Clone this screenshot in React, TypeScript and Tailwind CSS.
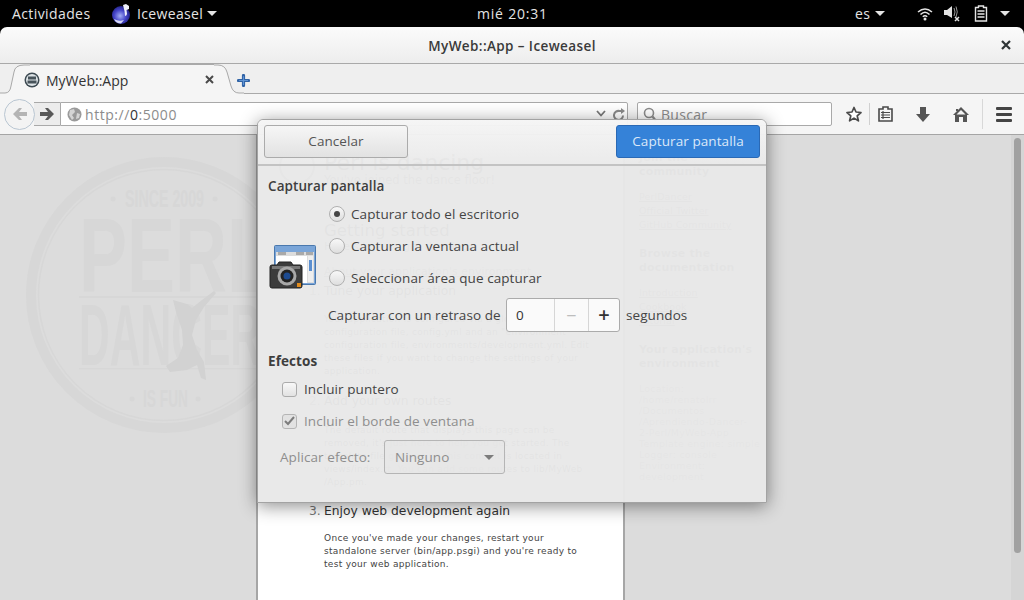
import React from "react";

const uiFont = "font-['Open_Sans','Noto_Sans',sans-serif]";
const pageFont = "font-['DejaVu_Sans',sans-serif]";

const IceweaselIcon = () => (
  <svg width="20" height="22" viewBox="0 0 20 22">
    <defs>
      <radialGradient id="ball" cx="0.45" cy="0.55" r="0.6">
        <stop offset="0" stopColor="#a4aef5" />
        <stop offset="0.55" stopColor="#4444c8" />
        <stop offset="1" stopColor="#1c1c78" />
      </radialGradient>
    </defs>
    <circle cx="10" cy="12" r="9" fill="url(#ball)" />
    <path d="M12 2 L15 1 L18 3 L18 6 L15.5 7 L16 11 Q15.5 13 14 13 L13.5 8 Z" fill="#eef0fa" />
    <path d="M3 16 Q8 19 13 17 L10 20.5 Q5 20.5 3 16 Z" fill="#d6d9f4" />
  </svg>
);

const Caret = ({ className }: { className: string }) => (
  <span className={`inline-block h-0 w-0 border-x-[5px] border-t-[5px] border-x-transparent ${className}`} />
);

const TopBar = () => (
  <div className={`flex h-[27px] items-center bg-black text-[14px] tracking-[0.4px] text-[#e4e4e4] ${uiFont}`}>
    <span className="ml-3 w-[77px] whitespace-nowrap">Actividades</span>
    <span className="ml-[22px]"><IceweaselIcon /></span>
    <span className="ml-[6px] w-[65px] whitespace-nowrap tracking-[0.35px]">Iceweasel</span>
    <Caret className="ml-[5px] border-t-[#e4e4e4]" />
    <span className="ml-[260px] w-[70px] whitespace-nowrap text-center tracking-[0.8px]">mié 20:31</span>
    <span className="ml-[308px] w-[14px]">es</span>
    <Caret className="ml-[6px] border-t-[#e4e4e4]" />
    <svg className="ml-[32px]" width="16" height="16" viewBox="0 0 16 16" fill="none" stroke="#e4e4e4" strokeWidth="1.5">
      <path d="M1 6 Q8 0 15 6" />
      <path d="M3.5 8.5 Q8 4 12.5 8.5" />
      <path d="M5.8 10.8 Q8 8.6 10.2 10.8" />
      <circle cx="8" cy="13" r="1.5" fill="#e4e4e4" stroke="none" />
    </svg>
    <svg className="ml-[11px]" width="17" height="17" viewBox="0 0 17 17" fill="none" stroke="#9a9a9a" strokeWidth="1">
      <path d="M0 5 H3 L8 1 V13 L3 10 H0 Z" fill="#e4e4e4" stroke="none" />
      <path d="M10 3 Q12 7 10 11" />
      <path d="M12 1.5 Q14.5 7 12 12" />
      <path d="M11 12 L15 16 M15 12 L11 16" stroke="#e4e4e4" strokeWidth="1.5" />
    </svg>
    <svg className="ml-[13px]" width="14" height="17" viewBox="0 0 14 17" fill="none" stroke="#e4e4e4">
      <path d="M4.5 1 H9.5 V2.5 H12.5 V16 H1.5 V2.5 H4.5 Z" strokeWidth="1.4" />
      <path d="M3.5 6 H10.5 M3.5 9 H10.5 M3.5 12 H10.5" strokeWidth="1.4" />
    </svg>
    <Caret className="ml-[12px] border-t-[#e4e4e4]" />
  </div>
);

const TitleBar = () => (
  <div className={`relative flex h-[37px] items-center justify-center rounded-t-[7px] border-b border-[#a9a9a9] bg-gradient-to-b from-[#fbfbfb] to-[#ededed] pt-[2px] text-[13.5px] font-semibold tracking-[0.4px] text-[#3a3a3a] ${uiFont}`}>
    MyWeb::App – Iceweasel
    <svg className="absolute right-[13px] top-[13px]" width="10" height="10" viewBox="0 0 10 10" stroke="#2e3436" strokeWidth="2.2">
      <path d="M1 1 L9 9 M9 1 L1 9" />
    </svg>
  </div>
);

const Favicon = () => (
  <svg width="16" height="16" viewBox="0 0 16 16">
    <circle cx="8" cy="8" r="7.5" fill="#3d4a52" />
    <circle cx="8" cy="8" r="6" fill="#dde3e6" />
    <rect x="4" y="4.5" width="8" height="3" fill="#47535a" />
    <rect x="3.5" y="8.5" width="9" height="3" fill="#47535a" />
  </svg>
);

const TabBar = () => (
  <div className="flex h-[30px] items-stretch border-b border-[#a9a9a9] bg-[#efefef]">
    <svg className="-mb-px" width="30" height="30" viewBox="0 0 30 30">
      <path d="M0 29 H5 Q10 29 11 22 L14 8 Q15 1 24 1 H30 V30 H0 Z" fill="#f5f5f5" />
      <path d="M0 29 H5 Q10 29 11 22 L14 8 Q15 1 24 1 H30" fill="none" stroke="#a9a9a9" />
    </svg>
    <div className={`-mb-px flex w-[184px] items-center border-t border-[#a9a9a9] bg-[#f5f5f5] ${uiFont}`}>
      <span className="-ml-[6px]"><Favicon /></span>
      <span className="ml-[6px] pt-[2px] text-[14px] text-[#333]">MyWeb::App</span>
      <svg className="ml-auto" width="9" height="9" viewBox="0 0 9 9" stroke="#4a4a4a" strokeWidth="2">
        <path d="M1 1 L8 8 M8 1 L1 8" />
      </svg>
    </div>
    <svg className="-mb-px" width="30" height="30" viewBox="0 0 30 30">
      <path d="M0 1 H4 Q11 1 13 8 L17 22 Q19 29 25 29 H30 V30 H0 Z" fill="#f5f5f5" />
      <path d="M0 1 H4 Q11 1 13 8 L17 22 Q19 29 25 29 H30" fill="none" stroke="#a9a9a9" />
    </svg>
    <svg className="ml-[-7px] mt-[10px]" width="13" height="13" viewBox="0 0 13 13">
      <path d="M6.5 1.5 V11.5 M1.5 6.5 H11.5" stroke="#2f62a5" strokeWidth="3.2" strokeLinecap="round" />
      <path d="M6.5 2.5 V10.5 M2.5 6.5 H10.5" stroke="#5f93d3" strokeWidth="1.2" strokeLinecap="round" />
    </svg>
  </div>
);

const ArrowIcon = ({ color, flip }: { color: string; flip?: boolean }) => (
  <svg width="14" height="12" viewBox="0 0 14 12" className={flip ? "-scale-x-100" : ""}>
    <path d="M0 6 L6 0 H9 L6 4 H14 V8 H6 L9 12 H6 Z" fill={color} />
  </svg>
);

const NavBar = () => (
  <div className={`flex h-[41px] items-center border-b border-[#a5a5a5] bg-[#f5f5f5] pl-[4px] ${uiFont}`}>
    <div className="z-10 flex h-[31px] w-[31px] shrink-0 items-center justify-center rounded-full border border-[#b9c6d2] bg-[#f3f3f3]">
      <ArrowIcon color="#b4b4b4" />
    </div>
    <div className="-ml-[1px] flex h-[24px] w-[26px] shrink-0 items-center justify-center border-y border-[#a9a9a9] bg-[#ececec]">
      <ArrowIcon color="#585858" flip />
    </div>
    <div className="flex h-[24px] w-[568px] shrink-0 items-center rounded-r-[2px] border border-[#a9a9a9] bg-white pl-[6px] text-[14px] tracking-[0.55px] text-[#8c8c8c]">
      <svg width="15" height="15" viewBox="0 0 15 15">
        <circle cx="7.5" cy="7.5" r="7" fill="#9a9a9a" />
        <path d="M3 3 L7 2 L8 5 L5 8 L7 11 L5 13 L2 8 Z M10 6 L13 7 L12 11 L9 12 Z" fill="#d4d4d4" />
      </svg>
      <span className="ml-[3px]">http://<span className="text-[#333]">0</span>:5000</span>
      <svg className="ml-auto mt-[-1px]" width="10" height="7" viewBox="0 0 10 7" fill="none" stroke="#777" strokeWidth="1.8">
        <path d="M1 1 L5 5.5 L9 1" />
      </svg>
      <svg className="ml-[7px] mr-[2px]" width="12" height="13" viewBox="0 0 12 13" fill="none" stroke="#8a8a8a" strokeWidth="2">
        <path d="M10 7.5 A4.5 4.5 0 1 1 6.5 3 H9" />
        <path d="M8 0 L12 3 L8 6 Z" fill="#8a8a8a" stroke="none" />
      </svg>
    </div>
    <div className="ml-[9px] flex h-[24px] w-[195px] shrink-0 items-center rounded-[2px] border border-[#a9a9a9] bg-white pl-[5px] text-[14px] text-[#8c8c8c]">
      <svg width="14" height="15" viewBox="0 0 14 15" fill="none" stroke="#8c8c8c" strokeWidth="1.6">
        <circle cx="6" cy="6" r="4.5" />
        <path d="M9.5 9.5 L13 14" strokeWidth="2.2" />
      </svg>
      <span className="ml-[4px] tracking-[0.3px]">Buscar</span>
    </div>
    <svg className="ml-[14px]" width="16" height="16" viewBox="0 0 16 16">
      <path d="M8 1.5 L10 6 L15 6.5 L11.2 9.8 L12.4 14.8 L8 12.1 L3.6 14.8 L4.8 9.8 L1 6.5 L6 6 Z" fill="#fff" stroke="#4a4a4a" strokeWidth="1.7" strokeLinejoin="round" />
    </svg>
    <div className="ml-[7px] h-[22px] w-px bg-[#d0d0d0]" />
    <svg className="ml-[8px]" width="15" height="16" viewBox="0 0 15 16">
      <path d="M5 1 H10 V3 H14 V15 H1 V3 H5 Z" fill="#f5f5f5" stroke="#4a4a4a" strokeWidth="1.6" />
      <path d="M3 6.5 H12 M3 9 H12 M3 11.5 H12 M5 5 V13" stroke="#4a4a4a" strokeWidth="1.2" />
    </svg>
    <svg className="ml-[23px]" width="14" height="15" viewBox="0 0 14 15">
      <path d="M4 0 H10 V7 H14 L7 15 L0 7 H4 Z" fill="#555" />
    </svg>
    <svg className="ml-[23px]" width="16" height="15" viewBox="0 0 16 15">
      <path d="M8 0 L16 8 H14 V15 H10 V10 H6 V15 H2 V8 H0 Z M3 2 H5 V4 H3 Z" fill="#555" />
      <path d="M8 3 L3.5 7.5 H12.5 Z" fill="#f5f5f5" />
    </svg>
    <div className="ml-[13px] h-[30px] w-px bg-[#d8d8d8]" />
    <div className="ml-[13px] flex w-[16px] flex-col gap-[3px]">
      <span className="h-[3px] rounded-[1px] bg-[#444]" />
      <span className="h-[3px] rounded-[1px] bg-[#444]" />
      <span className="h-[3px] rounded-[1px] bg-[#444]" />
    </div>
  </div>
);

// big watermark behind the page, drawn in page coordinates
const Watermark = () => (
  <svg className="absolute left-0 top-0" width="300" height="465" viewBox="0 135 300 465" fill="#d7d7d7">
    <circle cx="164" cy="295" r="133" fill="none" stroke="#d7d7d7" strokeWidth="10" />
    <circle cx="164" cy="295" r="125.5" fill="none" stroke="#d7d7d7" strokeWidth="1.5" />
    <text x="125" y="207" fontSize="23" textLength="79" lengthAdjust="spacingAndGlyphs" fontFamily="Liberation Sans" fontWeight="700">SINCE 2009</text>
    <circle cx="113" cy="199" r="2.5" />
    <circle cx="215" cy="199" r="2.5" />
    <text x="79" y="292" fontSize="105" textLength="192" lengthAdjust="spacingAndGlyphs" fontFamily="Liberation Sans" fontWeight="700">PERL</text>
    <rect x="79" y="296" width="190" height="2" />
    <text x="79" y="365" fontSize="88" textLength="182" lengthAdjust="spacingAndGlyphs" fontFamily="Liberation Sans" fontWeight="700">DANCER</text>
    <rect x="79" y="368" width="190" height="1.5" />
    <path d="M173 300 L180 302 L187 304 L192 308 L202 300 L214 291 L216 293 L204 307 L196 320 L192 335 L197 350 L204 362 L206 380 L201 378 L197 365 L187 370 L170 372 L166 366 L178 358 L183 345 L182 330 L176 312 Z" fill="#d2d2d2" />
    <text x="143" y="407" fontSize="23" textLength="45" lengthAdjust="spacingAndGlyphs" fontFamily="Liberation Sans" fontWeight="700">IS FUN</text>
    <circle cx="132" cy="399" r="2.5" />
    <circle cx="198" cy="399" r="2.5" />
  </svg>
);

const Para = ({ className, lines }: { className: string; lines: string[] }) => (
  <p className={`text-[9px] leading-[13px] tracking-[0.3px] text-[#444] ${className}`}>
    {lines.map((l) => (
      <span key={l} className="block whitespace-nowrap">{l}</span>
    ))}
  </p>
);

const Step = ({ n, title, className }: { n: string; title: string; className: string }) => (
  <div className={`relative text-[12.3px] leading-[16px] text-[#333] ${className}`}>
    <span className="absolute -left-[15px] text-[#777]">{n}</span>
    {title}
  </div>
);

const PageColumn = () => (
  <div className={`relative h-[465px] w-[369px] shrink-0 overflow-hidden border-x-2 border-[#a6a6a6] bg-white pl-[66px] pt-[16px] ${pageFont}`}>
    <svg className="absolute left-[20px] top-[12px]" width="38" height="38" viewBox="0 0 38 38" fill="none" stroke="#999">
      <circle cx="19" cy="19" r="17" strokeWidth="2" />
    </svg>
    <h1 className="text-[22px] leading-[24px] text-[#444]">Perl is dancing</h1>
    <p className="-mt-[2px] text-[11.5px] leading-[14px] text-[#666]">You&apos;ve joined the dance floor!</p>
    <h2 className="mt-[34px] text-[16.5px] leading-[20px] text-[#444]">Getting started</h2>
    <p className="text-[11px] leading-[12px] text-[#666]">Here&apos;s how to get dancing:</p>
    <p className="mt-[12px] text-[11px] leading-[14px] text-[#777] underline">About your application&apos;s environment</p>
    <Step n="1." title="Tune your application" className="mt-[4px]" />
    <Para
      className="mt-[14px]"
      lines={[
        "Your application is configured via a global",
        "configuration file, config.yml and an \"environment\"",
        "configuration file, environments/development.yml. Edit",
        "these files if you want to change the settings of your",
        "application.",
      ]}
    />
    <Step n="2." title="Add your own routes" className="mt-[15px]" />
    <Para
      className="mt-[15px]"
      lines={[
        "The default route that displays this page can be",
        "removed, it's just here to help you get started. The",
        "template file generating this content is located in",
        "views/index.tt. You can add some routes to lib/MyWeb",
        "/App.pm.",
      ]}
    />
    <Step n="3." title="Enjoy web development again" className="mt-[14px]" />
    <Para
      className="mt-[13px]"
      lines={[
        "Once you've made your changes, restart your",
        "standalone server (bin/app.psgi) and you're ready to",
        "test your web application.",
      ]}
    />
  </div>
);

const SideHeading = ({ className, children }: { className: string; children: React.ReactNode }) => (
  <h3 className={`w-[120px] text-[11px] font-bold leading-[14px] tracking-[0.15px] text-[#555] ${className}`}>{children}</h3>
);

const SideLinks = ({ links }: { links: string[] }) => (
  <ul className="mt-[11px] text-[9.5px] leading-[14px] tracking-[0.1px] text-[#666] underline">
    {links.map((l) => (
      <li key={l}>{l}</li>
    ))}
  </ul>
);

const PageSidebar = () => (
  <div className={`ml-[14px] pt-[16px] ${pageFont}`}>
    <SideHeading className="">Join the community</SideHeading>
    <SideLinks links={["PerlDancer", "Official Twitter", "GitHub Community"]} />
    <SideHeading className="mt-[15px]">Browse the documentation</SideHeading>
    <SideLinks links={["Introduction", "Cookbook", "Tutorial"]} />
    <SideHeading className="mt-[15px]">Your application&apos;s environment</SideHeading>
    <ul className="mt-[12px] whitespace-nowrap text-[9.5px] leading-[11px] tracking-[0.2px] text-[#777]">
      <li>Location:</li>
      <li>/home/renatolrr</li>
      <li>/Documentos</li>
      <li>/Aprendiendo-Dancer-</li>
      <li>2-Perl/MyWeb-App</li>
      <li>Template engine: simple</li>
      <li>Logger: console</li>
      <li>Environment:</li>
      <li>development</li>
    </ul>
  </div>
);

const Scrollbar = () => (
  <div className="absolute bottom-0 right-0 top-0 w-[13px] bg-[#d5d5d5] pl-[3px] pt-[3px]">
    <div className="h-[415px] w-[7px] rounded-full bg-[#a1a1a1]" />
  </div>
);

const Radio = ({ checked, label }: { checked?: boolean; label: string }) => (
  <div className="flex h-[16px] items-center">
    <span className="flex h-[16px] w-[16px] items-center justify-center rounded-full border border-[#b0b0b0] bg-gradient-to-b from-[#f8f8f8] to-[#dedede]">
      {checked && <span className="h-[6px] w-[6px] rounded-full bg-[#444]" />}
    </span>
    <span className="ml-[6px] text-[#444]">{label}</span>
  </div>
);

const CameraIcon = () => (
  <svg width="48" height="48" viewBox="0 0 48 48">
    <rect x="5.5" y="2.5" width="41" height="39" rx="1" fill="#7aa5d8" stroke="#4a78ad" />
    <rect x="7" y="9" width="38" height="31" fill="#dcdcdc" />
    <path d="M9 9 H17 V12 H9 Z M27 9 H35 V12 H27 Z M37 9 H44 V12 H37 Z" fill="#a9a9a9" />
    <rect x="7" y="13" width="31" height="27" fill="#fff" />
    <rect x="39" y="13" width="5" height="26" fill="#eee" />
    <rect x="40" y="17" width="3" height="11" fill="#5b8fd0" />
    <path d="M1 24 Q1 22 3 22 H8 L10 19 H22 L24 22 H31 Q33 22 33 24 V43 Q33 45 31 45 H3 Q1 45 1 43 Z" fill="#3c3c3c" stroke="#222" />
    <rect x="3" y="23" width="28" height="3" fill="#777" />
    <circle cx="18" cy="33" r="9.5" fill="#a8a8a8" />
    <circle cx="18" cy="33" r="6.5" fill="#222" />
    <circle cx="18" cy="33" r="3.5" fill="#1c4a90" />
    <rect x="28" y="40" width="4" height="4" fill="#e08b1d" />
  </svg>
);

const Dialog = () => (
  <div className={`absolute left-[257px] top-[119px] h-[384px] w-[510px] rounded-t-[6px] border border-[#a3a3a3] text-[13.5px] tracking-[0.08px] shadow-[0_3px_18px_rgba(0,0,0,0.45)] ${uiFont}`}>
    <div className="flex h-[46px] items-start justify-between rounded-t-[6px] border-b-2 border-[#c3c3c3] bg-gradient-to-b from-[#f5f5f5]/97 to-[#eaeaea]/97 px-[6px] pt-[5px]">
      <button className="h-[33px] w-[144px] rounded-[3px] border border-[#ababab] bg-gradient-to-b from-[#f6f6f6] to-[#e2e2e2] pb-px text-[#555]">Cancelar</button>
      <button className="h-[33px] w-[144px] rounded-[3px] border border-[#2a69b5] bg-[#3582d8] pb-px text-[#dbe8f8]">Capturar pantalla</button>
    </div>
    <div className="h-[336px] bg-[#e8e8e8]/97 pl-[10px]">
      <h4 className="pt-[11px] font-semibold leading-[18px] text-[#3e3e3e]">Capturar pantalla</h4>
      <div className="flex items-start">
        <div className="ml-px mt-[48px] w-[47px]"><CameraIcon /></div>
        <div className="ml-[12px]">
          <div className="ml-px mt-[11px] flex flex-col gap-[16px]">
            <Radio checked label="Capturar todo el escritorio" />
            <Radio label="Capturar la ventana actual" />
            <Radio label="Seleccionar área que capturar" />
          </div>
          <div className="mt-[12px] flex items-center text-[#444]">
            <span className="w-[178px]">Capturar con un retraso de</span>
            <div className="flex h-[34px] w-[114px] items-stretch rounded-[3px] border border-[#ababab] bg-[#fafafa]">
              <span className="flex w-[47px] items-center pl-[9px] text-[#333]">0</span>
              <span className="flex w-[34px] items-center justify-center border-l border-[#d6d6d6] text-[18px] text-[#bdbdbd]">−</span>
              <span className="flex flex-1 items-center justify-center border-l border-[#d6d6d6] text-[20px] font-semibold text-[#333]">+</span>
            </div>
            <span className="ml-[6px]">segundos</span>
          </div>
        </div>
      </div>
      <h4 className="mt-[20px] font-bold leading-[18px] text-[#3e3e3e]">Efectos</h4>
      <div className="ml-[14px] mt-[11px] flex flex-col gap-[16px]">
        <div className="flex h-[16px] items-center text-[#444]">
          <span className="h-[15px] w-[15px] rounded-[3px] border border-[#ababab] bg-gradient-to-b from-[#f8f8f8] to-[#e2e2e2]" />
          <span className="ml-[7px]">Incluir puntero</span>
        </div>
        <div className="flex h-[16px] items-center text-[#8e8e8e]">
          <span className="flex h-[15px] w-[15px] items-center justify-center rounded-[3px] border border-[#b5b5b5] bg-[#e2e2e2]">
            <svg width="11" height="10" viewBox="0 0 11 10" fill="none" stroke="#7c7c7c" strokeWidth="2">
              <path d="M1 5 L4 8 L10 1" />
            </svg>
          </span>
          <span className="ml-[7px]">Incluir el borde de ventana</span>
        </div>
      </div>
      <div className="ml-[12px] mt-[11px] flex items-center text-[#8e8e8e]">
        <span className="w-[104px]">Aplicar efecto:</span>
        <div className="flex h-[34px] w-[121px] items-center rounded-[3px] border border-[#b5b5b5] bg-[#e6e6e6]/70 pl-[10px] pr-[10px]">
          <span>Ninguno</span>
          <Caret className="ml-auto border-t-[#7c7c7c]" />
        </div>
      </div>
    </div>
  </div>
);

export default function App() {
  return (
    <div className="relative h-[600px] w-[1024px] overflow-hidden bg-black">
      <TopBar />
      <div className="flex h-[573px] flex-col">
        <TitleBar />
        <TabBar />
        <NavBar />
        <div className="relative flex flex-1 overflow-hidden bg-[#dcdcdc] pl-[256px]">
          <Watermark />
          <div className="relative flex">
            <PageColumn />
            <PageSidebar />
          </div>
          <Scrollbar />
        </div>
      </div>
      <Dialog />
    </div>
  );
}
